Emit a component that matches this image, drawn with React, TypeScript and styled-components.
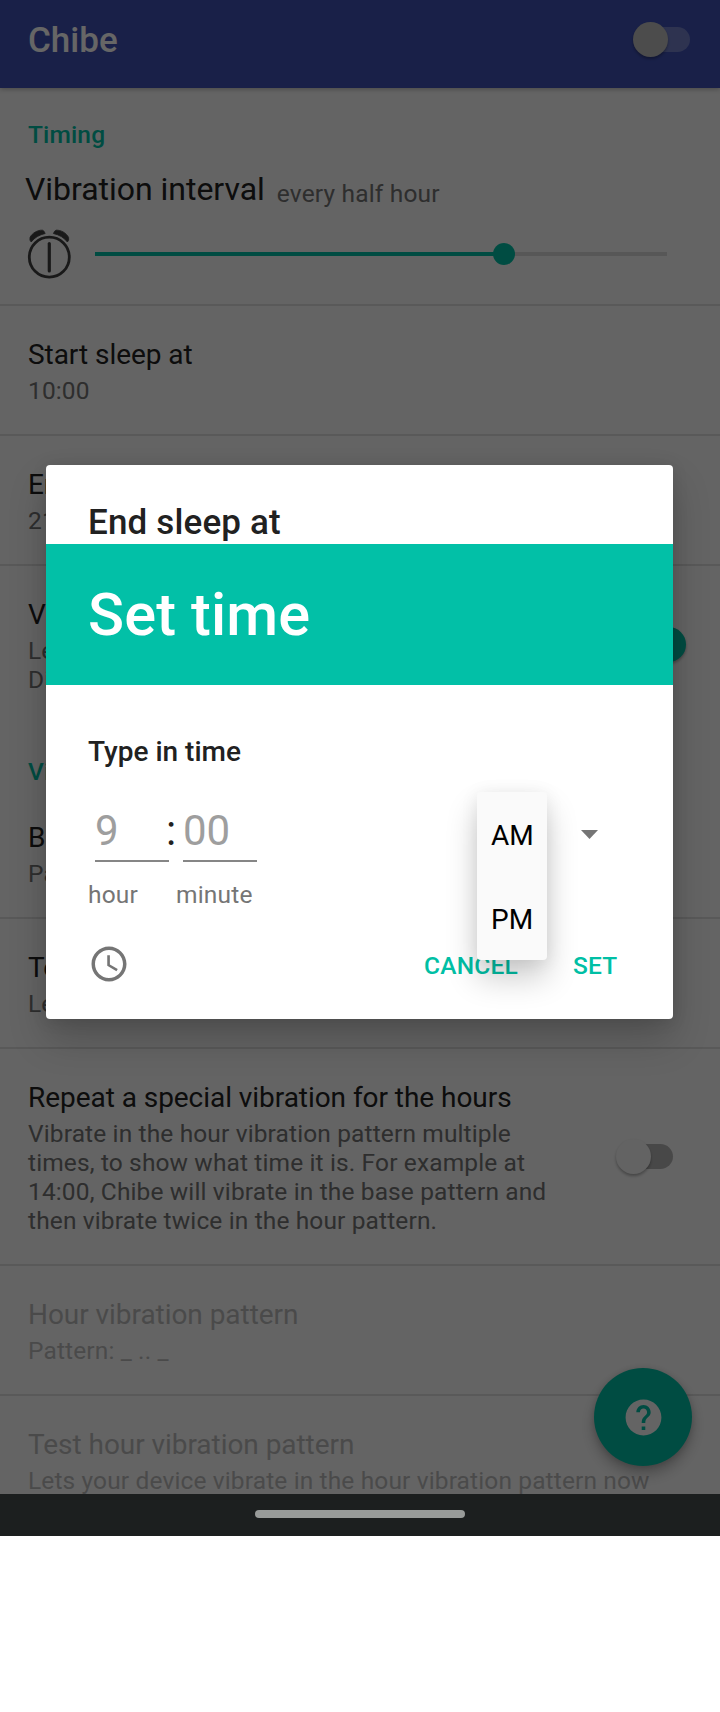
import React from "react";
import styled, { createGlobalStyle } from "styled-components";
import { MdAccessTime, MdHelp } from "react-icons/md";

const accent = "#00bfa5";

const GlobalStyle = createGlobalStyle`
  * { box-sizing: border-box; }
  body { margin: 0; background: #fff; font-family: Roboto, sans-serif; color: #212121; }
`;

const Page = styled.div`
  width: 720px;
  height: 1712px;
  background: #fff;
`;

const Screen = styled.div`
  position: relative;
  height: 1494px;
  overflow: hidden;
  background: #fafafa;
`;

const AppBar = styled.header`
  position: relative;
  display: flex;
  align-items: center;
  justify-content: space-between;
  height: 88px;
  padding: 0 17px 9px 28px;
  background: #3f51b5;
  box-shadow: 0 1px 5px rgba(0, 0, 0, 0.3);
`;

const AppTitle = styled.h1`
  margin: 0;
  padding-top: 2px;
  font-size: 35px;
  font-weight: 500;
  line-height: 42px;
  color: #fff;
`;

const Track = styled.span<{ $on?: boolean; $color: string }>`
  display: flex;
  flex: none;
  justify-content: ${(p) => (p.$on ? "flex-end" : "flex-start")};
  width: 70px;
  height: 35px;
  position: relative;

  &::before {
    content: "";
    position: absolute;
    left: 13px;
    top: 5px;
    width: 44px;
    height: 25px;
    border-radius: 13px;
    background: ${(p) => p.$color};
  }
`;

const Thumb = styled.span<{ $color: string }>`
  position: relative;
  width: 35px;
  height: 35px;
  border-radius: 50%;
  background: ${(p) => p.$color};
  box-shadow: 0 2px 3px rgba(0, 0, 0, 0.3);
`;

const SwitchSlot = styled.span`
  display: flex;
  align-self: center;
  margin: 0 6px 3px 0;
`;

const Category = styled.h2<{ $first?: boolean }>`
  height: ${(p) => (p.$first ? 64 : 66)}px;
  margin: 0;
  padding: ${(p) => (p.$first ? 32 : 34)}px 28px 0;
  font-size: 24.5px;
  font-weight: 500;
  line-height: 29px;
  letter-spacing: 0.15px;
  color: ${accent};
`;

const IntervalRow = styled.section`
  height: 154px;
  padding: 18px 28px 0 25px;
  border-bottom: 2px solid #dedede;
`;

const IntervalHeading = styled.div`
  display: flex;
  align-items: baseline;
  gap: 12px;
  height: 38px;
`;

const IntervalTitle = styled.span`
  font-size: 32px;
  line-height: 38px;
  letter-spacing: -0.03px;
`;

const IntervalValue = styled.span`
  font-size: 24.5px;
  line-height: 38px;
  letter-spacing: 0.17px;
  color: #737373;
  transform: translateY(2px);
`;

const SliderLine = styled.div`
  display: flex;
  align-items: center;
  height: 52px;
  margin-top: 20px;
`;

const ClockDrawing = styled.svg`
  width: 50px;
  height: 52px;
  margin-right: 20px;
`;

const SliderTrack = styled.div`
  display: flex;
  align-items: center;
  width: 572px;
  height: 4px;
  background: linear-gradient(to right, ${accent} 409px, #dadada 409px);
`;

const SliderThumb = styled.span`
  width: 22px;
  height: 22px;
  margin-left: 398px;
  border-radius: 50%;
  background: ${accent};
`;

const Row = styled.section<{ $last?: boolean; $disabled?: boolean }>`
  display: flex;
  justify-content: space-between;
  padding: 31px 28px 29px;
  border-bottom: ${(p) => (p.$last ? "none" : "2px solid #dedede")};
  --title: ${(p) => (p.$disabled ? "#bababa" : "#212121")};
  --summary: ${(p) => (p.$disabled ? "#bababa" : "#737373")};
`;

const RowTitle = styled.div`
  font-size: 28px;
  line-height: 36px;
  letter-spacing: -0.05px;
  white-space: nowrap;
  color: var(--title);
`;

const RowSummary = styled.div`
  margin-top: 3px;
  font-size: 24.5px;
  line-height: 29px;
  letter-spacing: 0.13px;
  white-space: pre-line;
  color: var(--summary);
`;

const Fab = styled.button`
  position: absolute;
  left: 594px;
  top: 1368px;
  display: flex;
  align-items: center;
  justify-content: center;
  width: 98px;
  height: 98px;
  padding: 0;
  border: 0;
  border-radius: 50%;
  background: ${accent};
  color: #fafafa;
  box-shadow: 0 8px 14px rgba(0, 0, 0, 0.25), 0 1px 6px rgba(0, 0, 0, 0.15);
`;

const Scrim = styled.div`
  position: absolute;
  inset: 0;
  background: rgba(0, 0, 0, 0.6);
`;

const Dialog = styled.div`
  position: absolute;
  left: 46px;
  top: 465px;
  width: 627px;
  height: 554px;
  border-radius: 4px;
  background: #fff;
  box-shadow: 0 20px 38px rgba(0, 0, 0, 0.2), 0 2px 16px rgba(0, 0, 0, 0.1);
`;

const DialogTitle = styled.h2`
  height: 79px;
  margin: 0;
  padding: 36px 42px 0;
  font-size: 35px;
  font-weight: 500;
  line-height: 44px;
  letter-spacing: 0.15px;
`;

const Banner = styled.div`
  height: 141px;
  padding: 35px 42px 0;
  background: #02c0a7;
  color: #fff;
  font-size: 59.5px;
  font-weight: 500;
  line-height: 72px;
  letter-spacing: 0.12px;
`;

const DialogBody = styled.div`
  padding: 50px 42px 0;
`;

const Prompt = styled.div`
  font-size: 28px;
  font-weight: 500;
  line-height: 34px;
`;

const TimeLine = styled.div`
  display: flex;
  padding: 36px 0 0 7px;
`;

const Field = styled.div`
  width: 74px;
  height: 57px;
  border-bottom: 2px solid #868686;
  font-size: 42px;
  line-height: 52px;
  color: #9e9e9e;
`;

const Colon = styled.div`
  width: 14px;
  font-size: 42px;
  line-height: 52px;
  text-indent: -3px;
`;

const Caret = styled.svg`
  width: 17px;
  height: 9px;
  margin: 25px 0 0 324px;
`;

const Labels = styled.div`
  display: grid;
  grid-template-columns: 88px auto;
  margin-top: 18px;
  font-size: 24.5px;
  line-height: 29px;
  letter-spacing: 0.2px;
  color: #757575;
`;

const Actions = styled.div`
  display: flex;
  align-items: center;
  margin-top: 34px;
  color: #757575;
`;

const Action = styled.button<{ $gap: number }>`
  margin: 3px 0 0 ${(p) => p.$gap}px;
  padding: 0;
  border: 0;
  background: none;
  font: 500 24.5px/29px Roboto, sans-serif;
  letter-spacing: 0.2px;
  color: ${accent};
`;

const Menu = styled.ul`
  position: absolute;
  left: 431px;
  top: 327px;
  width: 70px;
  margin: 0;
  padding: 0;
  border-radius: 4px;
  list-style: none;
  background: #fafafa;
  box-shadow: 0 18px 32px rgba(0, 0, 0, 0.2), 0 2px 18px rgba(0, 0, 0, 0.08);
`;

const MenuItem = styled.li`
  height: 84px;
  padding-left: 14px;
  font-size: 28px;
  line-height: 88px;
  color: #000;
`;

const NavBar = styled.footer`
  display: flex;
  justify-content: center;
  height: 42px;
  padding-top: 16px;
  background: #1c1f1f;
`;

const HomePill = styled.span`
  width: 210px;
  height: 8px;
  border-radius: 4px;
  background: #989b99;
`;

type SettingProps = {
  title: string;
  summary: string;
  disabled?: boolean;
  last?: boolean;
  toggle?: "on" | "off";
};

function Setting({ title, summary, disabled, last, toggle }: SettingProps) {
  const on = toggle === "on";
  return (
    <Row $disabled={disabled} $last={last}>
      <div>
        <RowTitle>{title}</RowTitle>
        <RowSummary>{summary}</RowSummary>
      </div>
      {toggle && (
        <SwitchSlot>
          <Track $on={on} $color={on ? "rgba(0, 191, 165, 0.3)" : "#b5b5b5"}>
            <Thumb $color={on ? accent : "#f7f7f7"} />
          </Track>
        </SwitchSlot>
      )}
    </Row>
  );
}

export default function App() {
  return (
    <Page>
      <GlobalStyle />
      <Screen>
        <AppBar>
          <AppTitle>Chibe</AppTitle>
          <Track $color="rgba(255, 255, 255, 0.27)">
            <Thumb $color="#bdbdbd" />
          </Track>
        </AppBar>
        <Category $first>Timing</Category>
        <IntervalRow>
          <IntervalHeading>
            <IntervalTitle>Vibration interval</IntervalTitle>
            <IntervalValue>every half hour</IntervalValue>
          </IntervalHeading>
          <SliderLine>
            <ClockDrawing viewBox="0 0 50 52" fill="none" stroke="#404040">
              <circle cx="24.3" cy="29.2" r="20" strokeWidth="2.8" />
              <path d="M24.3 15.500v27.500" strokeWidth="3.2" strokeLinecap="round" />
              <path
                d="M5 9.500C7 5 13 1.800 17.500 2.200Q19 2.400 20.200 5.500C14.500 6.800 9.500 9.500 6.200 14Q4.300 12.500 5 9.500ZM43.600 9.500C41.600 5 35.600 1.800 31.100 2.200Q29.600 2.400 28.400 5.500C34.100 6.800 39.100 9.500 42.400 14Q44.300 12.500 43.600 9.500Z"
                fill="#404040"
                strokeWidth="0.8"
                strokeLinejoin="round"
              />
            </ClockDrawing>
            <SliderTrack>
              <SliderThumb />
            </SliderTrack>
          </SliderLine>
        </IntervalRow>
        <Setting title="Start sleep at" summary="10:00" />
        <Setting title="End sleep at" summary="21:00" />
        <Setting
          title="Vibrate in silent mode"
          summary={"Lets your device vibrate when it is muted.\nDisable to turn it off."}
          toggle="on"
          last
        />
        <Category>Vibration</Category>
        <Setting title="Base vibration pattern" summary="Pattern: ." />
        <Setting title="Test base vibration pattern" summary="Lets your device vibrate in the base pattern now" />
        <Setting
          title="Repeat a special vibration for the hours"
          summary={
            "Vibrate in the hour vibration pattern multiple\ntimes, to show what time it is. For example at\n14:00, Chibe will vibrate in the base pattern and\nthen vibrate twice in the hour pattern."
          }
          toggle="off"
        />
        <Setting title="Hour vibration pattern" summary="Pattern: _ .. _" disabled />
        <Setting
          title="Test hour vibration pattern"
          summary="Lets your device vibrate in the hour vibration pattern now"
          disabled
        />
        <Fab aria-label="Help">
          <MdHelp size={43} />
        </Fab>
        <Scrim />
        <Dialog role="dialog">
          <DialogTitle>End sleep at</DialogTitle>
          <Banner>Set time</Banner>
          <DialogBody>
            <Prompt>Type in time</Prompt>
            <TimeLine>
              <Field>9</Field>
              <Colon>:</Colon>
              <Field>00</Field>
              <Caret viewBox="0 0 17 9">
                <path d="M0 0h17l-8.500 9z" fill="#757575" />
              </Caret>
            </TimeLine>
            <Labels>
              <span>hour</span>
              <span>minute</span>
            </Labels>
            <Actions>
              <MdAccessTime size={42} />
              <Action $gap={294}>CANCEL</Action>
              <Action $gap={55}>SET</Action>
            </Actions>
          </DialogBody>
          <Menu>
            <MenuItem>AM</MenuItem>
            <MenuItem>PM</MenuItem>
          </Menu>
        </Dialog>
      </Screen>
      <NavBar>
        <HomePill />
      </NavBar>
    </Page>
  );
}
